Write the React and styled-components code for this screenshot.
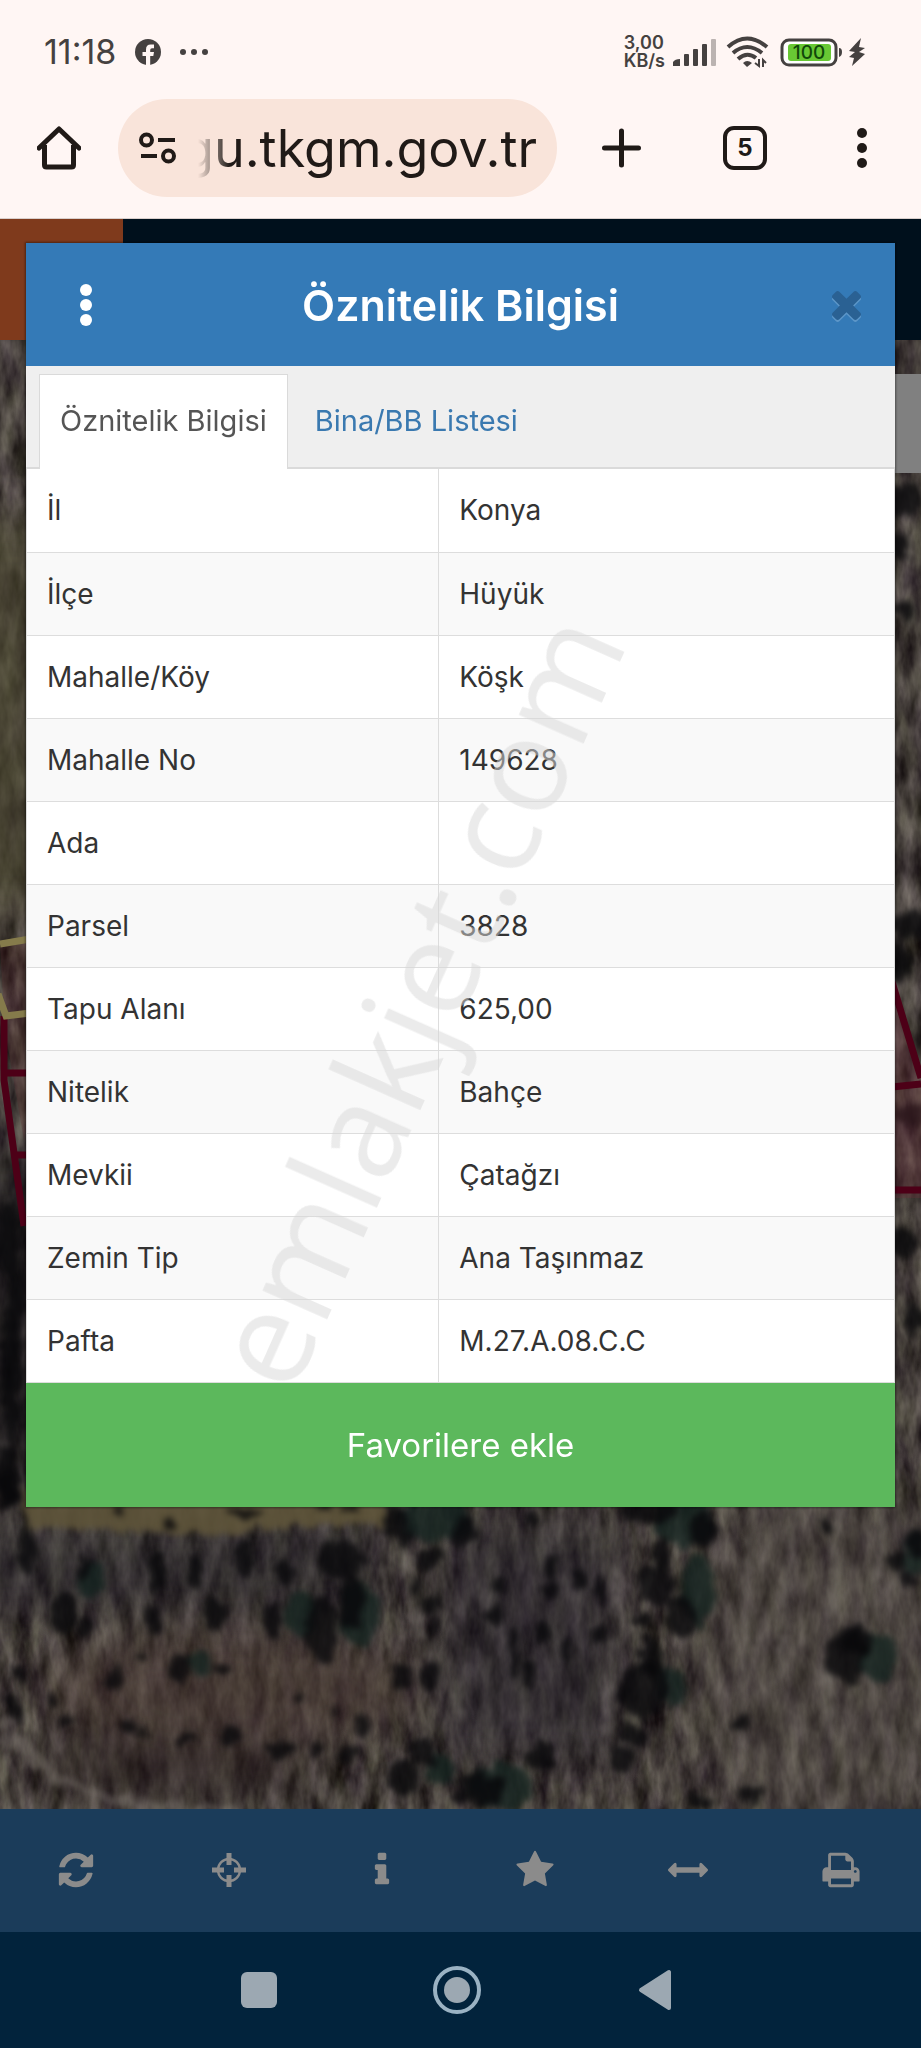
import React from 'react';
import styled, { createGlobalStyle } from 'styled-components';

const GlobalStyle = createGlobalStyle`
  * {
    box-sizing: border-box;
  }
  body {
    margin: 0;
    background: #02233c;
    font-family: 'Inter', 'Liberation Sans', sans-serif;
    color: #333;
  }
  button, input {
    margin: 0;
    padding: 0;
    border: 0;
    background: none;
    font-family: inherit;
    color: inherit;
  }
  svg {
    display: block;
  }
`
const Page = styled.div`
  display: flex;
  flex-direction: column;
  min-height: 100vh;
`

/* phone status bar */
const StatusBar = styled.div`
  display: flex;
  align-items: center;
  justify-content: space-between;
  padding: 32px 54px 27px 44px;
  background: #fff6f4;
  color: #454140;
`
const StatusGroup = styled.div`
  display: flex;
  align-items: center;
  gap: ${props => props.$gap}px;
`
const Clock = styled.div`
  font-size: 34px;
  line-height: 40px;
`
const NetSpeed = styled.div`
  font-size: 18px;
  line-height: 18px;
  font-weight: 600;
`

/* browser bar */
const BrowserBar = styled.div`
  display: flex;
  align-items: center;
  padding: 0 54px 21px 37px;
  border-bottom: 1px solid #d9cfcc;
  background: #fff6f4;
  color: #201a17;
`
const BarButton = styled.button`
  flex: none;
  margin-left: ${props => props.$left || 0}px;
`
const AddressPill = styled.div`
  display: flex;
  align-items: center;
  flex: 1;
  min-width: 0;
  gap: 22px;
  height: 98px;
  margin-left: 37px;
  padding: 0 20px 0 21px;
  border-radius: 49px;
  background: #f9e4da;
`
const Address = styled.input`
  flex: 1;
  min-width: 0;
  height: 72px;
  font-size: 52px;
  outline: none;
  mask-image: linear-gradient(to right, transparent 0, #000 32px);
`
const TabCount = styled.button`
  flex: none;
  width: 44px;
  height: 44px;
  margin-left: 82px;
  border: 4px solid #201a17;
  border-radius: 11px;
  font-size: 24px;
  line-height: 36px;
  font-weight: 700;
`

/* web page under the dialog */
const Viewport = styled.main`
  position: relative;
  flex: 1;
  padding: 24px 26px 302px;
`
const Backdrop = styled.div`
  position: absolute;
  inset: 0;
  display: flex;
  flex-direction: column;
  background: #3e3936;
`
const SiteHeader = styled.div`
  flex: none;
  height: 121px;
  background: linear-gradient(to right, #7f3a1c 123px, #00101c 123px);
`
const MapArea = styled.div`
  position: relative;
  flex: 1;
  min-height: 0;
  overflow: hidden;
`
const MapPicture = styled.svg`
  position: absolute;
  inset: 0;
  width: 100%;
  height: 100%;
`

/* dialog */
const Dialog = styled.section`
  position: relative;
  box-shadow: 0 0 2px 1px rgba(0, 0, 0, 0.4);
  background: #fff;
`
const DialogHeader = styled.header`
  display: grid;
  grid-template-columns: 1fr auto 1fr;
  align-items: center;
  padding: 32px 34px 31px;
  background: #347ab7;
  color: #fff;
`
const DialogTitle = styled.h1`
  margin: 0;
  font-size: 43px;
  line-height: 60px;
  font-weight: 600;
`
const MenuButton = styled.button`
  justify-self: start;
`
const CloseButton = styled.button`
  justify-self: end;
  color: #2a6193;
  filter: drop-shadow(0 2px 0 #5c96c8);
`
const Tabs = styled.div`
  display: flex;
  gap: 6px;
  padding: 8px 13px 0;
  border-bottom: 2px solid #dadada;
  background: #efefef;
`
const Tab = styled.button`
  margin-bottom: -2px;
  padding: 25px 20px 27px;
  border: 1px solid ${props => props.$active ? '#dadada' : 'transparent'};
  border-bottom: 0;
  background: ${props => props.$active ? '#fff' : 'none'};
  color: ${props => props.$active ? '#555' : '#3a79b0'};
  font-size: 29px;
  line-height: 42px;
`
const TableWrap = styled.div`
  position: relative;
`
const Table = styled.table`
  width: 100%;
  border: 1px solid #ddd;
  border-top: 0;
  border-collapse: collapse;
  table-layout: fixed;
  font-size: 28px;
  line-height: 40px;
`
const Row = styled.tr`
  border-bottom: 1px solid #ddd;
  background: ${props => props.$striped ? '#f9f9f9' : '#fff'};
`
const Label = styled.th`
  width: 47.5%;
  height: 83px;
  padding: 20px 20px;
  border-right: 1px solid #ddd;
  font-weight: 400;
  text-align: left;
`
const Value = styled.td`
  padding: 20px 20px;
`
const Watermark = styled.div`
  position: absolute;
  left: 44.6%;
  top: 58%;
  transform: translate(-50%, -50%) rotate(-66deg);
  font-family: 'Open Sans', sans-serif;
  font-size: 132px;
  line-height: 132px;
  white-space: nowrap;
  color: rgba(216, 216, 216, 0.5);
  pointer-events: none;
`
const FavoriteButton = styled.button`
  display: block;
  width: 100%;
  padding: 38px 20px;
  background: #5cb85c;
  color: #fff;
  font-size: 33px;
  line-height: 48px;
`

/* bottom bars */
const Toolbar = styled.nav`
  display: grid;
  grid-template-columns: repeat(6, 1fr);
  padding-right: 4px;
  background: #1b3c5a;
  color: #8b8b8b;
`
const ToolButton = styled.button`
  display: flex;
  justify-content: center;
  padding: 41px 0 42px;
`
const SystemNav = styled.nav`
  display: flex;
  justify-content: center;
  gap: 150px;
  padding: 34px 7px 34px 0;
  background: #02233c;
  color: #9ca8b2;
`

const rows = [
  ['İl', 'Konya'],
  ['İlçe', 'Hüyük'],
  ['Mahalle/Köy', 'Köşk'],
  ['Mahalle No', '149628'],
  ['Ada', ''],
  ['Parsel', '3828'],
  ['Tapu Alanı', '625,00'],
  ['Nitelik', 'Bahçe'],
  ['Mevkii', 'Çatağzı'],
  ['Zemin Tip', 'Ana Taşınmaz'],
  ['Pafta', 'M.27.A.08.C.C']
];

const icons = {
  refresh: 'M1639 1056q0 5-1 7-64 268-268 434.500t-478 166.500q-146 0-282.500-55t-243.500-157l-129 129q-19 19-45 19t-45-19-19-45v-448q0-26 19-45t45-19h448q26 0 45 19t19 45-19 45l-137 137q71 66 161 102t187 36q134 0 250-65t186-179q11-17 53-117 8-23 30-23h192q13 0 22.500 9.500t9.500 22.500zm25-800v448q0 26-19 45t-45 19h-448q-26 0-45-19t-19-45 19-45l138-138q-148-137-349-137-134 0-250 65t-186 179q-11 17-53 117-8 23-30 23h-199q-13 0-22.500-9.500t-9.500-22.500v-7q65-268 270-434.500t480-166.500q146 0 284 55.500t245 156.500l130-129q19-19 45-19t45 19 19 45z',
  info: 'M1216 1344v128q0 26-19 45t-45 19h-512q-26 0-45-19t-19-45v-128q0-26 19-45t45-19h64v-384h-64q-26 0-45-19t-19-45v-128q0-26 19-45t45-19h384q26 0 45 19t19 45v576h64q26 0 45 19t19 45zm-128-1152v192q0 26-19 45t-45 19h-256q-26 0-45-19t-19-45v-192q0-26 19-45t45-19h256q26 0 45 19t19 45z',
  star: 'M1728 647q0 22-26 48l-363 354 86 500q1 7 1 20 0 21-10.500 35.500t-30.500 14.500q-19 0-40-12l-449-236-449 236q-22 12-40 12-21 0-31.500-14.500t-10.500-35.500q0-6 2-20l86-500-364-354q-25-27-25-48 0-37 56-46l502-73 225-455q19-41 49-41t49 41l225 455 502 73q56 9 56 46z',
  arrows: 'M1792 896q0 26-19 45l-256 256q-19 19-45 19t-45-19-19-45v-128h-1024v128q0 26-19 45t-45 19-45-19l-256-256q-19-19-19-45t19-45l256-256q19-19 45-19t45 19 19 45v128h1024v-128q0-26 19-45t45-19 45 19l256 256q19 19 19 45z',
  print: 'M448 1536h896v-256h-896v256zm0-640h896v-384h-160q-40 0-68-28t-28-68v-160h-640v640zm1152 64q0-26-19-45t-45-19-45 19-19 45 19 45 45 19 45-19 19-45zm128 0v416q0 13-9.500 22.500t-22.500 9.500h-224v160q0 40-28 68t-68 28h-960q-40 0-68-28t-28-68v-160h-224q-13 0-22.500-9.500t-9.500-22.500v-416q0-79 56.500-135.500t135.500-56.500h64v-544q0-40 28-68t68-28h672q40 0 88 20t76 48l152 152q28 28 48 76t20 88v256h64q79 0 135.500 56.500t56.500 135.500z',
  times: 'M1490 1322q0 40-28 68l-136 136q-28 28-68 28t-68-28l-294-294-294 294q-28 28-68 28t-68-28l-136-136q-28-28-28-68t28-68l294-294-294-294q-28-28-28-68t28-68l136-136q28-28 68-28t68 28l294 294 294-294q28-28 68-28t68 28l136 136q28 28 28 68t-28 68l-294 294 294 294q28 28 28 68z'
};

const Icon = ({ name, size = 40, box = '0 0 1792 1792' }) => (
  <svg width={size} height={size} viewBox={box} fill="currentColor" aria-hidden="true">
    <path d={icons[name]} />
  </svg>
)

const Crosshairs = () => (
  <svg width="40" height="40" viewBox="0 0 40 40" stroke="currentColor" fill="none" aria-hidden="true">
    <circle cx="20" cy="20" r="11" strokeWidth="2.400" />
    <path strokeWidth="5" d="M20 3v12M20 25v12M3 20h12M25 20h12" />
  </svg>
)

const Dots = ({ width, height, r, step }) => (
  <svg width={width} height={height} fill="currentColor" aria-hidden="true">
    {[-1, 0, 1].map(i => <circle key={i} cx={width / 2} cy={height / 2 + i * step} r={r} />)}
  </svg>
)

// trees and shade: x, y, rx, ry
const shrubs = [
  [10, 1040, 10, 70], [8, 1140, 14, 30], [26, 1210, 9, 26], [84, 1228, 7, 13], [158, 1233, 8, 20],
  [154, 1279, 8, 17], [64, 1272, 12, 20], [86, 1288, 8, 10], [195, 1232, 8, 17], [245, 1218, 8, 18],
  [216, 1272, 12, 15], [272, 1280, 10, 18], [288, 1235, 8, 14], [342, 1222, 24, 22], [322, 1290, 18, 32],
  [352, 1262, 12, 28], [178, 1326, 9, 16], [140, 1319, 5, 5], [20, 1332, 7, 8], [115, 1338, 10, 11],
  [222, 1330, 6, 6], [52, 1360, 6, 7], [65, 1381, 6, 5], [128, 1386, 6, 6], [14, 1370, 11, 13],
  [300, 1358, 5, 5], [337, 1372, 5, 6], [187, 1398, 10, 6], [228, 1396, 10, 8], [145, 1393, 7, 6],
  [281, 1410, 12, 9], [316, 1410, 8, 8], [346, 1416, 11, 11], [363, 1387, 8, 10], [400, 1338, 11, 11],
  [430, 1336, 9, 17], [435, 1288, 7, 10], [432, 1265, 9, 12], [416, 1248, 7, 9], [430, 1218, 14, 10],
  [395, 1182, 12, 14], [406, 1198, 9, 9], [465, 1190, 14, 14], [532, 1178, 9, 9], [498, 1247, 9, 8],
  [552, 1228, 8, 14], [578, 1240, 7, 12], [550, 1250, 7, 10], [600, 1250, 7, 16], [543, 1292, 7, 14],
  [598, 1296, 7, 12], [568, 1310, 7, 16], [514, 1310, 6, 26], [528, 1336, 7, 16], [496, 1276, 7, 12],
  [650, 1170, 26, 14], [704, 1190, 12, 18], [662, 1212, 10, 16], [656, 1244, 18, 22], [680, 1276, 16, 22],
  [640, 1280, 12, 8], [650, 1314, 12, 20], [645, 1350, 26, 28], [634, 1394, 15, 10], [624, 1420, 14, 11],
  [740, 1385, 8, 8], [846, 1316, 20, 30], [858, 1300, 14, 14], [896, 1222, 10, 8], [916, 1205, 8, 14],
  [908, 1238, 10, 9], [422, 1412, 14, 14], [404, 1440, 17, 18], [540, 1416, 15, 14], [480, 1450, 26, 18],
  [700, 1462, 12, 8], [752, 1456, 12, 10], [6, 1150, 10, 20], [825, 1184, 6, 6], [118, 1172, 7, 6],
  [170, 1183, 8, 7], [245, 1172, 14, 6], [322, 1168, 8, 5], [352, 1170, 7, 6],
  [8, 900, 12, 40], [18, 960, 10, 30], [905, 160, 16, 18], [900, 205, 12, 14], [910, 585, 22, 14],
  [905, 270, 8, 10], [900, 620, 14, 20], [912, 775, 14, 14], [900, 905, 18, 14], [915, 980, 12, 14]
];
const greens = [
  [435, 1180, 36, 22], [360, 1275, 18, 34], [300, 1275, 16, 22], [685, 1180, 30, 26], [698, 1250, 16, 36],
  [878, 1318, 18, 24], [500, 1448, 30, 24], [440, 1430, 14, 16], [90, 1240, 14, 20], [200, 1325, 14, 12],
  [670, 1345, 16, 20], [915, 1215, 10, 20]
];

const SatelliteMap = () => (
  <MapPicture viewBox="0 0 921 1469" preserveAspectRatio="xMidYMax slice" aria-hidden="true">
    <defs>
      <filter id="grain" x="0" y="0" width="100%" height="100%" colorInterpolationFilters="sRGB">
        <feTurbulence type="fractalNoise" baseFrequency="0.06 0.022" numOctaves="4" seed="7" />
        <feColorMatrix values="0.52 0 0.03 0 -0.010  0.52 0 0 0 -0.020  0.46 0 0.07 0 -0.040  0 0 0 0 1" />
      </filter>
      <filter id="rough" x="-10%" y="-10%" width="120%" height="120%" colorInterpolationFilters="sRGB">
        <feTurbulence type="fractalNoise" baseFrequency="0.060" numOctaves="3" seed="3" />
        <feDisplacementMap in="SourceGraphic" scale="20" xChannelSelector="R" yChannelSelector="G" />
        <feGaussianBlur stdDeviation="3" />
      </filter>
      <filter id="soft" colorInterpolationFilters="sRGB">
        <feGaussianBlur stdDeviation="22" />
      </filter>
    </defs>
    <rect width="921" height="1469" filter="url(#grain)" />
    <g filter="url(#soft)">
      <rect x="-40" y="180" width="90" height="400" fill="#4c4a30" opacity="0.6" />
      <rect x="-40" y="820" width="90" height="320" fill="#0d0c10" opacity="0.6" />
      <rect x="440" y="1180" width="180" height="240" fill="#26222c" opacity="0.5" />
      <rect x="-40" y="1180" width="420" height="90" fill="#252429" opacity="0.5" />
      <ellipse cx="230" cy="1350" rx="190" ry="60" fill="#4a3831" opacity="0.5" />
      <ellipse cx="820" cy="1320" rx="130" ry="190" fill="#57504a" opacity="0.4" />
      <ellipse cx="170" cy="1430" rx="150" ry="30" fill="#2b2222" opacity="0.6" />
    </g>
    <g filter="url(#rough)">
      <path d="M22 1150H384V1184Q300 1182 240 1190T30 1188Z" fill="#5e543a" opacity="0.9" />
      <g stroke="#8b857e" fill="none" opacity="0.4">
        <path d="M795 1170L778 1340M838 1170L826 1400M882 1170L874 1280" strokeWidth="5" />
        <path d="M400 1190Q410 1260 420 1290T500 1440" strokeWidth="5" />
        <path d="M0 1380Q30 1425 80 1448T240 1470" strokeWidth="12" />
        <path d="M620 1180L600 1440M750 1190L740 1440" strokeWidth="3" />
      </g>
      {greens.map(([x, y, rx, ry], i) => <ellipse key={i} cx={x} cy={y} rx={rx} ry={ry} fill="#14231f" opacity="0.8" />)}
      {shrubs.map(([x, y, rx, ry], i) => <ellipse key={i} cx={x} cy={y} rx={rx} ry={ry} fill="#08080a" opacity="0.8" />)}
    </g>
    {/* parcel borders */}
    <path d="M0 606L30 601V775L24 800L5 690Z" fill="#5a2a30" opacity="0.3" />
    <path d="M894 650L921 740V858H894Z" fill="#6b3038" opacity="0.35" />
    <g fill="none" strokeWidth="7">
      <path d="M4 676V740L24 886M4 733H30M14 815H30M892 642L921 738M892 747L921 744M892 850H921" stroke="#4d0017" />
      <path d="M0 604L30 599M-2 654L6 676L30 673" stroke="#857b4b" />
    </g>
    <rect x="880" y="34" width="41" height="99" fill="#808080" />
  </MapPicture>
)

class App extends React.Component {
  constructor(props) {
    super(props)
    this.state = {
      activeTab: 0,
      address: 'gu.tkgm.gov.tr'
    }
    this.handleAddress = this.handleAddress.bind(this);
  }

  handleAddress(event) {
    this.setState({
      address: event.target.value
    })
  }

  render() {
    return (
      <Page>
        <GlobalStyle />
        <StatusBar>
          <StatusGroup $gap={19}>
            <Clock>11:18</Clock>
            <svg width="26" height="26" viewBox="0 0 26 26" aria-hidden="true">
              <circle cx="13" cy="13" r="13" fill="#454140" />
              <path d="M11 26V17H7.500V13H11V10.500Q11 5.500 15.800 5.500H19V9.300H17Q15.200 9.300 15.200 11V13H19L18.300 17H15.200V26Z" fill="#fff6f4" />
            </svg>
            <svg width="28" height="8" fill="#454140" aria-hidden="true">
              <circle cx="3" cy="4" r="3" />
              <circle cx="14" cy="4" r="3" />
              <circle cx="25" cy="4" r="3" />
            </svg>
          </StatusGroup>
          <StatusGroup $gap={8}>
            <NetSpeed>3,00<br />KB/s</NetSpeed>
            <svg width="44" height="28" fill="#454140" aria-hidden="true">
              <path d="M7 21V28H0V24Q2 21 7 21Z" />
              <rect x="11" y="16" width="5" height="12" rx="1" />
              <rect x="20" y="11" width="5" height="17" rx="1" />
              <rect x="29" y="6" width="5" height="22" rx="1" />
              <rect x="38" y="1" width="5" height="27" rx="1" fill="#bbb3b1" />
            </svg>
            <svg width="44" height="32" viewBox="0 0 44 32" aria-hidden="true">
              <g fill="none" stroke="#454140" strokeWidth="4">
                <path d="M3 11Q22-6 42 11" />
                <path d="M8 17Q22 5 37 17" />
                <path d="M13 23Q22 15 31 22" />
              </g>
              <path d="M18 27Q22 23 27 27L22 31Z" fill="#454140" />
              <path d="M34 23V30L30 27M38 31V24L41 27" fill="none" stroke="#454140" strokeWidth="2" />
            </svg>
            <svg width="90" height="30" viewBox="0 0 90 30" aria-hidden="true">
              <rect x="5" y="3" width="54" height="25" rx="7" fill="#fff" stroke="#454140" strokeWidth="3" />
              <rect x="11" y="7" width="43" height="17" rx="3" fill="#68c834" />
              <text x="32" y="22" textAnchor="middle" fontSize="19" fontWeight="500" fill="#11480a">100</text>
              <path d="M62 11Q65 11 65 15T62 20Z" fill="#454140" />
              <path d="M84 1L72 14L78 15L72 20L77 21L75 29L88 17L82 15L88 11L82 10Z" fill="#454140" />
            </svg>
          </StatusGroup>
        </StatusBar>

        <BrowserBar>
          <BarButton aria-label="Home">
            <svg width="44" height="44" viewBox="0 0 44 44" fill="none" stroke="currentColor" strokeWidth="5" aria-hidden="true">
              <path d="M2 22L22 3L42 22" strokeLinejoin="round" strokeLinecap="round" />
              <path d="M7.500 19V39Q7.500 41 9.500 41H34.500Q36.500 41 36.500 39V19" />
            </svg>
          </BarButton>
          <AddressPill>
            <BarButton aria-label="Site settings">
              <svg width="37" height="32" viewBox="0 0 37 32" fill="none" stroke="currentColor" strokeWidth="4" aria-hidden="true">
                <circle cx="7.500" cy="8" r="5.500" />
                <path d="M19 8H36M2 24H18" />
                <circle cx="29.500" cy="24" r="5.500" />
              </svg>
            </BarButton>
            <Address aria-label="Address" dir="rtl" value={this.state.address} onChange={this.handleAddress} />
          </AddressPill>
          <BarButton $left={45} aria-label="New tab">
            <svg width="39" height="40" viewBox="0 0 39 40" stroke="currentColor" strokeWidth="5" strokeLinecap="round" aria-hidden="true">
              <path d="M19.500 3V37M2.500 20H36.500" />
            </svg>
          </BarButton>
          <TabCount aria-label="5 open tabs">5</TabCount>
          <BarButton $left={90} aria-label="Browser menu">
            <Dots width={10} height={44} r={5} step={15} />
          </BarButton>
        </BrowserBar>

        <Viewport>
          <Backdrop>
            <SiteHeader />
            <MapArea>
              <SatelliteMap />
            </MapArea>
          </Backdrop>
          <Dialog role="dialog" aria-labelledby="dialog-title">
            <DialogHeader>
              <MenuButton aria-label="Menu"><Dots width={52} height={44} r={6} step={15} /></MenuButton>
              <DialogTitle id="dialog-title">Öznitelik Bilgisi</DialogTitle>
              <CloseButton aria-label="Close"><Icon name="times" size={29} box="302 366 1188 1188" /></CloseButton>
            </DialogHeader>
            <Tabs role="tablist">
              {['Öznitelik Bilgisi', 'Bina/BB Listesi'].map((label, i) => (
                <Tab key={label} role="tab" aria-selected={this.state.activeTab === i} $active={this.state.activeTab === i} onClick={() => this.setState({ activeTab: i })}>{label}</Tab>
              ))}
            </Tabs>
            <TableWrap>
              <Table>
                <tbody>
                  {rows.map(([label, value], i) => (
                    <Row key={label} $striped={i % 2 === 1}>
                      <Label scope="row">{label}</Label>
                      <Value>{value}</Value>
                    </Row>
                  ))}
                </tbody>
              </Table>
              <Watermark>emlakjet.com</Watermark>
            </TableWrap>
            <FavoriteButton>Favorilere ekle</FavoriteButton>
          </Dialog>
        </Viewport>

        <Toolbar>
          <ToolButton aria-label="Refresh"><Icon name="refresh" /></ToolButton>
          <ToolButton aria-label="Locate"><Crosshairs /></ToolButton>
          <ToolButton aria-label="Info"><Icon name="info" /></ToolButton>
          <ToolButton aria-label="Favorites"><Icon name="star" /></ToolButton>
          <ToolButton aria-label="Measure"><Icon name="arrows" /></ToolButton>
          <ToolButton aria-label="Print"><Icon name="print" /></ToolButton>
        </Toolbar>
        <SystemNav>
          <button aria-label="Recent apps">
            <svg width="48" height="48" fill="currentColor"><rect x="6" y="6" width="36" height="36" rx="6" /></svg>
          </button>
          <button aria-label="Home screen">
            <svg width="48" height="48" fill="currentColor">
              <circle cx="24" cy="24" r="22" fill="none" stroke="#9ab2c3" strokeWidth="4" />
              <circle cx="24" cy="24" r="13" />
            </svg>
          </button>
          <button aria-label="Back">
            <svg width="48" height="48" fill="currentColor" stroke="currentColor" strokeWidth="4" strokeLinejoin="round">
              <path d="M10 24L38 6V42Z" />
            </svg>
          </button>
        </SystemNav>
      </Page>
    )
  }
}

export default App;
